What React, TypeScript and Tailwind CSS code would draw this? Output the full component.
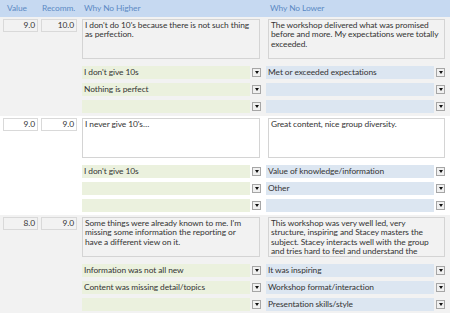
import React from "react";

type Row = {
  value: string;
  recomm: string;
  higher: string;
  lower: string;
  higherOpts: string[];
  lowerOpts: string[];
  shaded: boolean;
};

// line breaks follow the form's own wrapping
const ROWS: Row[] = [
  {
    value: "9.0",
    recomm: "10.0",
    higher: "I don't do 10's because there is not such thing\nas perfection.",
    lower: "The workshop delivered what was promised\nbefore and more. My expectations were totally\nexceeded.",
    higherOpts: ["I don't give 10s", "Nothing is perfect", ""],
    lowerOpts: ["Met or exceeded expectations", "", ""],
    shaded: true,
  },
  {
    value: "9.0",
    recomm: "9.0",
    higher: "I never give 10's…",
    lower: "Great content, nice group diversity.",
    higherOpts: ["I don't give 10s", "", ""],
    lowerOpts: ["Value of knowledge/information", "Other", ""],
    shaded: false,
  },
  {
    value: "8.0",
    recomm: "9.0",
    higher: "Some things were already known to me. I'm\nmissing some information the reporting or\nhave a different view on it.",
    lower: "This workshop was very well led, very\nstructure, inspiring and Stacey masters the\nsubject. Stacey interacts well with the group\nand tries hard to feel and understand the",
    higherOpts: ["Information was not all new", "Content was missing detail/topics", ""],
    lowerOpts: ["It was inspiring", "Workshop format/interaction", "Presentation skills/style"],
    shaded: true,
  },
];

function DropButton() {
  return (
    <div className="w-[9px] h-[9px] border border-[#a6a6a6] bg-[#f0f0f0] flex items-center justify-center shrink-0">
      <div className="w-0 h-0 border-l-[2.5px] border-r-[2.5px] border-t-[3px] border-l-transparent border-r-transparent border-t-[#111]" />
    </div>
  );
}

function Combo({ label, color }: { label: string; color: string }) {
  return (
    <div className="flex items-center h-[13px]">
      <div className={`flex-1 h-full ${color} pl-[2px] leading-[13px] truncate`}>{label}</div>
      <div className="w-[11px] flex justify-end">
        <DropButton />
      </div>
    </div>
  );
}

function RecordRow({ row }: { row: Row }) {
  const boxBg = row.shaded ? "bg-[#f2f2f2]" : "bg-white";
  return (
    <div className={`flex pt-[2px] pb-[3px] ${row.shaded ? "bg-[#f2f2f2]" : "bg-white"}`}>
      <div className="flex gap-[3px] ml-[3px]">
        <div className={`w-[35px] h-[13px] border border-[#d9d9d9] ${boxBg} text-right pr-[2px] leading-[11px]`}>
          {row.value}
        </div>
        <div className={`w-[36px] h-[13px] border border-[#d9d9d9] ${boxBg} text-right pr-[2px] leading-[11px]`}>
          {row.recomm}
        </div>
      </div>
      <div className="ml-[5px] w-[179px]">
        <div className={`h-[40px] w-[178px] border border-[#d4d4d4] ${boxBg} px-[2px] pt-[1px] leading-[9.4px] whitespace-pre-line overflow-hidden`}>
          {row.higher}
        </div>
        <div className="mt-[7px] flex flex-col gap-[4px]">
          {row.higherOpts.map((o, i) => (
            <Combo key={i} label={o} color="bg-[#ebf1de]" />
          ))}
        </div>
      </div>
      <div className="ml-[5px] w-[179px]">
        <div className={`h-[40px] ml-[2px] w-[177px] border border-[#d4d4d4] ${boxBg} px-[2px] pt-[1px] leading-[9.4px] whitespace-pre-line overflow-hidden`}>
          {row.lower}
        </div>
        <div className="mt-[7px] flex flex-col gap-[4px]">
          {row.lowerOpts.map((o, i) => (
            <Combo key={i} label={o} color="bg-[#dce6f1]" />
          ))}
        </div>
      </div>
    </div>
  );
}

export default function App() {
  return (
    <div
      className="w-[450px] h-[313px] overflow-hidden bg-white text-[8.4px] tracking-[-0.08px] text-[#333]"
      style={{ fontFamily: "Lato, 'Open Sans', sans-serif" }}
    >
      <div className="h-[17px] bg-[#c6d9f1] flex items-center text-[#5c8ac4]">
        <span className="ml-[7px] w-[35px]">Value</span>
        <span className="w-[42px]">Recomm.</span>
        <span className="w-[186px]">Why No Higher</span>
        <span>Why No Lower</span>
      </div>
      {ROWS.map((r, i) => (
        <RecordRow key={i} row={r} />
      ))}
    </div>
  );
}
